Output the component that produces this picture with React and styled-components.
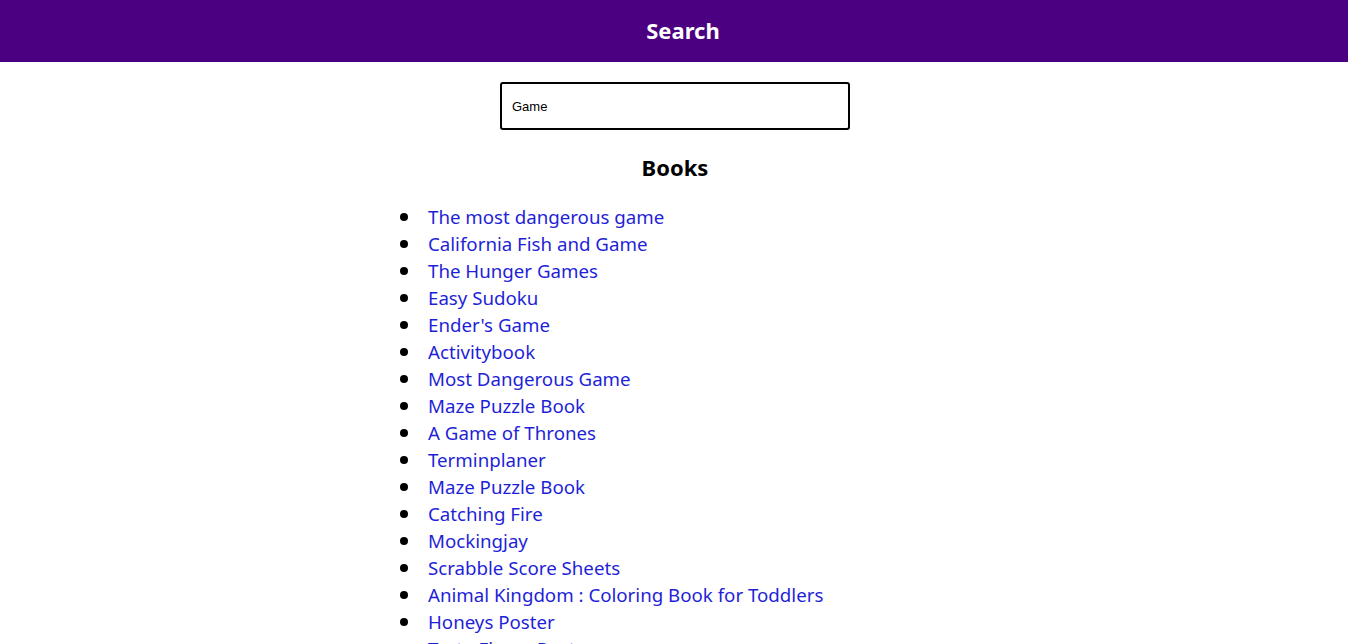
import styled, { createGlobalStyle } from "styled-components";

const GlobalStyle = createGlobalStyle`
  body {
    margin: 0;
    background: #fff;
    font-family: "Noto Sans", "Open Sans", sans-serif;
  }
`;

const Header = styled.header`
  height: 62px;
  box-sizing: border-box;
  padding: 0 0 2px 18px;
  background: #4b0082;
  color: #fff;
  display: flex;
  align-items: center;
  justify-content: center;
  font-size: 22px;
  font-weight: 700;
`;

const Main = styled.main`
  width: 572px;
  margin: 0 auto;
  padding: 20px 0 0 2px;
  display: flex;
  flex-direction: column;
  align-items: center;
`;

const SearchInput = styled.input`
  box-sizing: border-box;
  width: 350px;
  height: 48px;
  border: 2px solid #000;
  border-radius: 3px;
  padding: 0 10px;
  font-family: "Liberation Sans", Arial, sans-serif;
  font-size: 13px;
  color: #000;
  outline: none;
`;

const Title = styled.h2`
  margin: 22px 0 21px;
  font-size: 22px;
  line-height: 30px;
  font-weight: 700;
  color: #000;
`;

const BookList = styled.ul`
  align-self: stretch;
  margin: 0;
  padding: 0;
  list-style: none;
  font-size: 18.7px;
  line-height: 27px;
`;

const BookItem = styled.li`
  display: flex;
  align-items: center;

  &::before {
    content: "";
    width: 8px;
    height: 8px;
    margin: 0 20px 0 11px;
    border-radius: 50%;
    background: #000;
  }
`;

const BookLink = styled.a`
  color: #1f1fd8;
  text-decoration: none;
`;

const books = [
  "The most dangerous game",
  "California Fish and Game",
  "The Hunger Games",
  "Easy Sudoku",
  "Ender's Game",
  "Activitybook",
  "Most Dangerous Game",
  "Maze Puzzle Book",
  "A Game of Thrones",
  "Terminplaner",
  "Maze Puzzle Book",
  "Catching Fire",
  "Mockingjay",
  "Scrabble Score Sheets",
  "Animal Kingdom : Coloring Book for Toddlers",
  "Honeys Poster",
  "Taste Flavor Poster",
];

export default function App() {
  return (
    <>
      <GlobalStyle />
      <Header>Search</Header>
      <Main>
        <SearchInput defaultValue="Game" />
        <Title>Books</Title>
        <BookList>
          {books.map((b, i) => (
            <BookItem key={i}>
              <BookLink href="#">{b}</BookLink>
            </BookItem>
          ))}
        </BookList>
      </Main>
    </>
  );
}
